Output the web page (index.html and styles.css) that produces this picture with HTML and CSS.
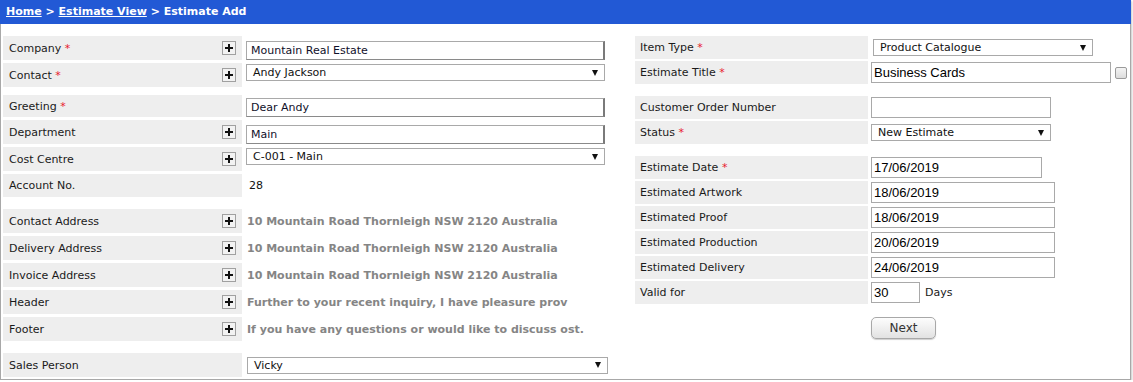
FILE: index.html
```html
<!DOCTYPE html>
<html lang="en">

<head>
    <meta charset="UTF-8">
    <meta name="viewport" content="width=device-width, initial-scale=1.0">
    <title>Estimate Add</title>
    <link rel="stylesheet" href="styles.css">
</head>

<body>
    <div class="page">
        <header class="crumbs">
            <a href="#">Home</a> &gt; <a href="#">Estimate View</a> &gt; Estimate Add
        </header>
        <section class="content">
            <article class="col col-left">
                <div class="group">
                    <div class="row">
                        <div class="label">Company <span class="req">*</span><span class="plus"></span></div>
                        <div class="field bottom"><input class="txt" type="text" value="Mountain Real Estate"></div>
                    </div>
                    <div class="row">
                        <div class="label">Contact <span class="req">*</span><span class="plus"></span></div>
                        <div class="field top"><div class="sel">Andy Jackson<span class="arrow"></span></div></div>
                    </div>
                </div>
                <div class="group g2">
                    <div class="row short">
                        <div class="label">Greeting <span class="req">*</span></div>
                        <div class="field bottom"><input class="txt" type="text" value="Dear Andy"></div>
                    </div>
                    <div class="row">
                        <div class="label">Department<span class="plus"></span></div>
                        <div class="field bottom"><input class="txt" type="text" value="Main"></div>
                    </div>
                    <div class="row">
                        <div class="label">Cost Centre<span class="plus"></span></div>
                        <div class="field top"><div class="sel">C-001 - Main<span class="arrow"></span></div></div>
                    </div>
                    <div class="row mid">
                        <div class="label">Account No.</div>
                        <div class="field"><span class="value">28</span></div>
                    </div>
                </div>
                <div class="group g3">
                    <div class="row">
                        <div class="label">Contact Address<span class="plus"></span></div>
                        <div class="field"><span class="note">10 Mountain Road Thornleigh NSW 2120 Australia</span></div>
                    </div>
                    <div class="row">
                        <div class="label">Delivery Address<span class="plus"></span></div>
                        <div class="field"><span class="note">10 Mountain Road Thornleigh NSW 2120 Australia</span></div>
                    </div>
                    <div class="row">
                        <div class="label">Invoice Address<span class="plus"></span></div>
                        <div class="field"><span class="note">10 Mountain Road Thornleigh NSW 2120 Australia</span></div>
                    </div>
                    <div class="row">
                        <div class="label">Header<span class="plus"></span></div>
                        <div class="field"><span class="note">Further to your recent inquiry, I have pleasure prov</span></div>
                    </div>
                    <div class="row">
                        <div class="label">Footer<span class="plus"></span></div>
                        <div class="field"><span class="note">If you have any questions or would like to discuss ost.</span></div>
                    </div>
                </div>
                <div class="group g3">
                    <div class="row">
                        <div class="label">Sales Person</div>
                        <div class="field"><div class="sel sales">Vicky<span class="arrow"></span></div></div>
                    </div>
                </div>
            </article>

            <article class="col col-right">
                <div class="group">
                    <div class="row">
                        <div class="label">Item Type <span class="req">*</span></div>
                        <div class="field"><div class="sel item">Product Catalogue<span class="arrow"></span></div></div>
                    </div>
                    <div class="row">
                        <div class="label">Estimate Title <span class="req">*</span></div>
                        <div class="field"><input class="box title" type="text" value="Business Cards"><span class="check"></span></div>
                    </div>
                </div>
                <div class="group g3">
                    <div class="row">
                        <div class="label">Customer Order Number</div>
                        <div class="field"><input class="box order" type="text" value=""></div>
                    </div>
                    <div class="row">
                        <div class="label">Status <span class="req">*</span></div>
                        <div class="field"><div class="sel status">New Estimate<span class="arrow"></span></div></div>
                    </div>
                </div>
                <div class="group g3">
                    <div class="row">
                        <div class="label">Estimate Date <span class="req">*</span></div>
                        <div class="field"><input class="box date-main" type="text" value="17/06/2019"></div>
                    </div>
                    <div class="row">
                        <div class="label">Estimated Artwork</div>
                        <div class="field"><input class="box date" type="text" value="18/06/2019"></div>
                    </div>
                    <div class="row">
                        <div class="label">Estimated Proof</div>
                        <div class="field"><input class="box date" type="text" value="18/06/2019"></div>
                    </div>
                    <div class="row">
                        <div class="label">Estimated Production</div>
                        <div class="field"><input class="box date" type="text" value="20/06/2019"></div>
                    </div>
                    <div class="row">
                        <div class="label">Estimated Delivery</div>
                        <div class="field"><input class="box date" type="text" value="24/06/2019"></div>
                    </div>
                    <div class="row">
                        <div class="label">Valid for</div>
                        <div class="field"><input class="box days" type="text" value="30"><span class="unit">Days</span></div>
                    </div>
                </div>
                <div class="actions">
                    <button class="btn" type="button">Next</button>
                </div>
            </article>
        </section>
    </div>
</body>

</html>
```

FILE: styles.css
```css
html {
    box-sizing: border-box;
    font-family: "DejaVu Sans", Verdana, sans-serif;
    font-size: 11px;
}

*,
*::before,
*::after {
    box-sizing: inherit;
}

body {
    margin: 0;
    background-color: #fff;
    color: #111;
}

.page {
    width: 1131px;
    height: 380px;
    border: 1px solid #a8a8a8;
    border-top: 0;
    box-shadow: 1px 1px 2px #c8c8c8;
}

.crumbs {
    height: 24px;
    margin: 0 -1px;
    padding: 0 6px;
    background-color: #2259d5;
    color: #fff;
    font-weight: bold;
    font-size: 11px;
    line-height: 23px;
}

.crumbs a {
    color: #fff;
}

.content {
    display: flex;
    padding-top: 12px;
}

.col {
    display: flex;
    flex-direction: column;
}

.col-left {
    margin-left: 2px;
    width: 606px;
}

.col-right {
    margin-left: 26px;
}

.group {
    display: flex;
    flex-direction: column;
}

.col-left .group {
    gap: 3px;
}

.col-right .group {
    gap: 2px;
}

.g2 {
    margin-top: 8px;
}

.g3 {
    margin-top: 12px;
}

.row {
    display: flex;
    height: 24px;
}

.row.short {
    height: 22px;
}

.row.mid {
    height: 23px;
}

.col-right .row {
    height: 23px;
}

.label {
    display: flex;
    align-items: center;
    background-color: #eeeeee;
    color: #1a1a1a;
    white-space: pre;
}

.col-left .label {
    width: 239px;
    padding: 0 6px;
}

.col-right .label {
    width: 233px;
    padding: 0 5px;
}

.req {
    color: #e8192c;
}

.plus {
    margin-left: auto;
    width: 14px;
    height: 14px;
    border: 1px solid #a0a0a0;
    background-color: #f2f2f2;
    position: relative;
}

.plus::before,
.plus::after {
    content: "";
    position: absolute;
    background-color: #111;
}

.plus::before {
    left: 2px;
    top: 5px;
    width: 8px;
    height: 2px;
}

.plus::after {
    left: 5px;
    top: 2px;
    width: 2px;
    height: 8px;
}

.field {
    display: flex;
    align-items: center;
    flex-grow: 1;
}

.col-left .field {
    margin-left: 4px;
}

.col-right .field {
    margin-left: 3px;
}

.field.bottom {
    align-items: flex-end;
}

.field.top {
    align-items: flex-start;
    padding-top: 1px;
}

.txt {
    width: 359px;
    height: 19px;
    margin: 0;
    padding: 0 4px;
    border: 1px solid #a9a9a9;
    border-right: 2px solid #7a7a7a;
    border-bottom: 1px solid #8a8a8a;
    font-family: "DejaVu Sans", Verdana, sans-serif;
    font-size: 11px;
    color: #10102a;
    outline: none;
}

.sel {
    display: flex;
    align-items: center;
    width: 359px;
    height: 17px;
    padding: 0 6px 0 6px;
    border: 1px solid #a9a9a9;
    background-color: #fff;
    color: #111;
}

.sel.sales {
    width: 361px;
    margin-left: 1px;
}

.sel.item {
    width: 220px;
    margin-left: 2px;
}

.sel.status {
    width: 180px;
}

.arrow {
    margin-left: auto;
    width: 0;
    height: 0;
    border-left: 3.5px solid transparent;
    border-right: 3.5px solid transparent;
    border-top: 6px solid #111;
}

.value {
    padding-left: 3px;
    color: #111;
}

.note {
    padding-left: 1px;
    font-weight: bold;
    color: #858585;
    white-space: nowrap;
}

.box {
    height: 21px;
    margin: 0;
    padding: 0 2px;
    border: 1px solid #a9a9a9;
    font-family: "Liberation Sans", Arial, sans-serif;
    font-size: 13px;
    color: #000;
    outline: none;
}

.box.title {
    width: 240px;
}

.box.order {
    width: 180px;
}

.box.date-main {
    width: 171px;
}

.box.date {
    width: 184px;
}

.box.days {
    width: 49px;
}

.check {
    width: 12px;
    height: 12px;
    margin-left: 4px;
    border: 1px solid #9a9a9a;
    border-radius: 2px;
    background: linear-gradient(#f4f4f4, #dcdcdc);
}

.unit {
    margin-left: 5px;
    color: #1a1a1a;
}

.actions {
    margin-top: 13px;
    padding-left: 236px;
}

.btn {
    width: 65px;
    height: 22px;
    margin: 0;
    border: 1px solid #a8a8a8;
    border-radius: 5px;
    background: linear-gradient(#fdfdfd, #e2e2e2);
    box-shadow: 0 1px 1px #cfcfcf;
    font-family: "DejaVu Sans", Verdana, sans-serif;
    font-size: 12px;
    color: #333;
}
```
